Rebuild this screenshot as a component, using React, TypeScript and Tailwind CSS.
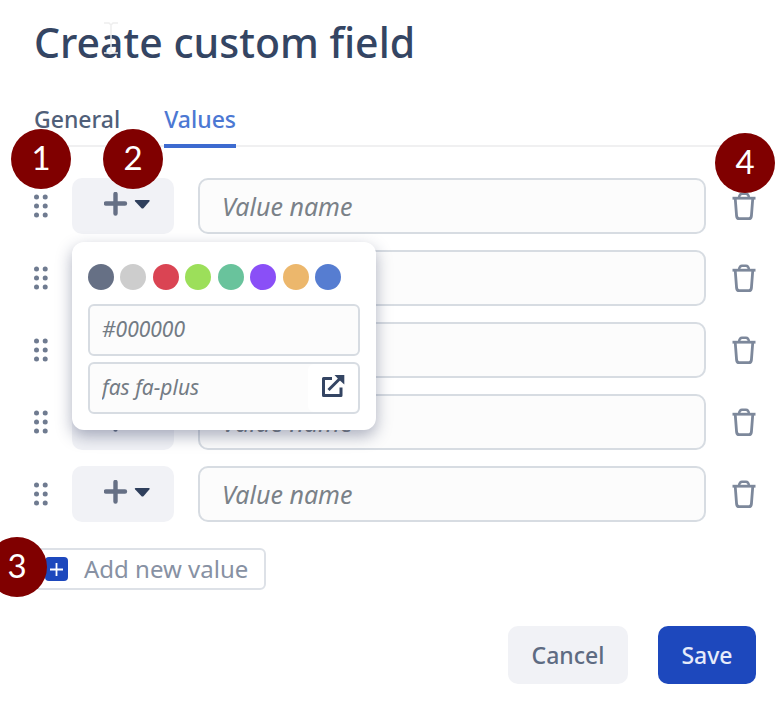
import { useState } from 'react';
import type { ReactNode } from 'react';

const swatches = [
  { name: 'Slate', color: 'bg-[#667085]' },
  { name: 'Gray', color: 'bg-[#cdcdcd]' },
  { name: 'Red', color: 'bg-[#da4453]' },
  { name: 'Lime', color: 'bg-[#9cdf5a]' },
  { name: 'Green', color: 'bg-[#69c39c]' },
  { name: 'Purple', color: 'bg-[#8a4ff7]' },
  { name: 'Orange', color: 'bg-[#ecb76c]' },
  { name: 'Blue', color: 'bg-[#567dd1]' },
];

function Badge({ children, place }: { children: ReactNode; place: string }) {
  return (
    <span
      className={`pointer-events-none absolute z-20 flex size-[60px] items-center justify-center rounded-full bg-[#800000] pb-1 font-['Lato',sans-serif] text-[33px] leading-none font-normal text-white ${place}`}
    >
      {children}
    </span>
  );
}

function Grip() {
  return (
    <svg className="h-6 w-[14px]" viewBox="0 0 14 24" fill="#6f7b90" aria-hidden="true">
      {[3, 12, 21].map((y) => (
        <g key={y}>
          <circle cx="2.5" cy={y} r="2.5" />
          <circle cx="11.2" cy={y} r="2.5" />
        </g>
      ))}
    </svg>
  );
}

function PlusCaret() {
  return (
    <svg className="h-6 w-[46px]" viewBox="0 0 46 24" aria-hidden="true">
      <path d="M2 11.500H21M11.500 2V21.500" stroke="#667085" strokeWidth="4.400" strokeLinecap="round" />
      <path d="M31.500 8H45Q46.300 8 45.300 9.500L39.700 16Q38.500 17.200 37.300 16L31.200 9.500Q30.200 8 31.500 8Z" fill="#2f3f5c" />
    </svg>
  );
}

function Trash() {
  return (
    <svg className="h-[30px] w-6" viewBox="0 0 24 30" fill="none" stroke="#7d889b" strokeWidth="2.400" aria-hidden="true">
      <path d="M0.500 7.200H23.500" strokeWidth="2.800" />
      <path d="M3.200 7L4.600 25Q4.900 27.700 7.200 27.700H16.800Q19.100 27.700 19.400 25L20.800 7" strokeWidth="2.800" />
      <path d="M7 6.500Q7.500 2.700 10 2.700H14Q16.500 2.700 17 6.500" />
    </svg>
  );
}

function ExternalLink() {
  return (
    <svg className="size-6" viewBox="0 0 24 24" fill="none" stroke="#344563" strokeWidth="3" strokeLinejoin="round" aria-hidden="true">
      <path d="M11 4.500H2.500V21.500H20V13.500" />
      <path d="M7.500 16L20 3.500" />
      <path d="M13.500 1H23.300V10.500L20 7.500L16.500 4.200Z" fill="#344563" stroke="none" />
    </svg>
  );
}

function StylePopup() {
  const box =
    'h-[52px] w-full rounded-md border-2 border-[#d7dce2] bg-[#fcfcfc] px-3 pb-[2px] text-[21px] italic text-[#596773] placeholder:text-[#737b84] placeholder:opacity-100';
  return (
    <div className="absolute top-16 left-0 z-10 flex w-[304px] flex-col gap-[6px] rounded-xl bg-white px-4 pt-[22px] pb-4 shadow-[0_6px_16px_rgba(40,50,90,0.38)]">
      <div className="mb-2 flex w-[253px] justify-between">
        {swatches.map((s) => (
          <button key={s.name} type="button" aria-label={s.name} className={`size-[26px] rounded-full ${s.color}`} />
        ))}
      </div>
      <input className={box} aria-label="Color" placeholder="#000000" />
      <div className="relative">
        <input className={box} aria-label="Icon" placeholder="fas fa-plus" />
        <a href="#icons" aria-label="Browse icons" className="absolute inset-y-[2px] right-[2px] flex w-[50px] items-center justify-center rounded-md bg-white pb-1">
          <ExternalLink />
        </a>
      </div>
    </div>
  );
}

export default function App() {
  const [rows] = useState([1, 2, 3, 4, 5]);
  return (
    <main className="min-h-[710px] overflow-hidden bg-white pr-[22px] pb-6 pl-[34px] font-['Noto_Sans','Open_Sans',sans-serif]">
      <h1 className="relative pt-[14px] text-[41px] leading-[56px] font-medium text-[#344563]">
        Create custom field
        <svg className="absolute top-[22px] left-[70px] h-8 w-[14px]" viewBox="0 0 14 32" fill="none" stroke="#eeeeee" strokeWidth="1.500" aria-hidden="true">
          <path d="M0 1H5L7 3L9 1H14M7 3V29M0 31H5L7 29L9 31H14" />
        </svg>
      </h1>

      <nav className="mt-[30px] flex h-[47px] gap-[44px] text-[23px] leading-[38px] font-medium shadow-[inset_0_-2px_0_#f0f0f1]">
        <a href="#general" className="text-[#505f79]">General</a>
        <a href="#values" aria-current="page" className="h-12 border-b-4 border-[#3d6bd0] text-[#4c78d3]">Values</a>
      </nav>

      <form onSubmit={(e) => e.preventDefault()}>
        <ul className="mt-[31px] flex flex-col gap-4">
          {rows.map((row) => (
            <li key={row} className="flex h-14 items-center">
              <button type="button" aria-label={`Move value ${row}`} className="relative mr-6 flex w-[14px] justify-center">
                <Grip />
                {row === 1 && <Badge place="-left-[23px] -top-[65px]">1</Badge>}
              </button>
              <div className="relative mr-6 h-14 w-[102px]">
                <button type="button" aria-label={`Style of value ${row}`} className="flex size-full items-center justify-center rounded-[10px] bg-[#f1f2f6] pb-1 pl-2">
                  <PlusCaret />
                </button>
                {row === 1 && <Badge place="left-[31px] -top-[49px]">2</Badge>}
                {row === 1 && <StylePopup />}
              </div>
              <input
                aria-label={`Value ${row}`}
                placeholder="Value name"
                className="h-14 min-w-0 flex-1 rounded-[10px] border-2 border-[#d7dce2] bg-[#fcfcfc] px-[22px] text-[25px] italic placeholder:text-[#7a8188] placeholder:opacity-100"
              />
              <button type="button" aria-label={`Delete value ${row}`} className="relative ml-[26px]">
                <Trash />
                {row === 1 && <Badge place="-left-[17px] -top-[58px]">4</Badge>}
              </button>
            </li>
          ))}
        </ul>

        <button type="button" className="relative mt-[26px] flex h-[42px] w-[232px] items-center gap-4 rounded-md border-2 border-[#dde1e7] pl-[9px] text-[24px] text-[#8791a3]">
          <span className="flex h-6 w-[23px] items-center justify-center rounded bg-[#1d48bd]">
            <svg className="size-[13px]" viewBox="0 0 13 13" stroke="white" strokeWidth="1.800" aria-hidden="true">
              <path d="M6.500 0V13M0 6.500H13" />
            </svg>
          </span>
          <span className="whitespace-nowrap">Add new value</span>
          <Badge place="-left-[49px] -top-[13px]">3</Badge>
        </button>

        <div className="mt-9 flex justify-end gap-[30px] text-[23px] font-medium">
          <button type="button" className="h-[58px] w-[120px] rounded-[10px] bg-[#f1f2f6] text-[#5e6b82]">Cancel</button>
          <button type="submit" className="h-[58px] w-[98px] rounded-[10px] bg-[#1d48bd] text-[#e6ebfa]">Save</button>
        </div>
      </form>
    </main>
  );
}
